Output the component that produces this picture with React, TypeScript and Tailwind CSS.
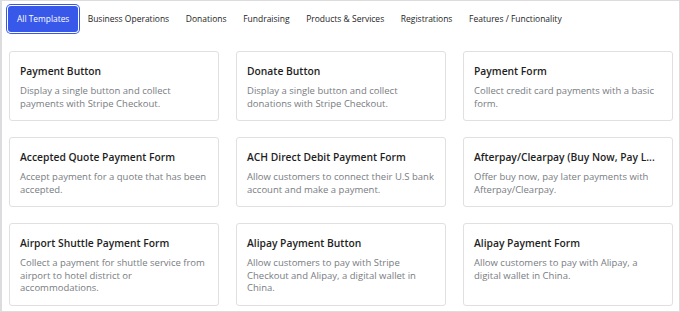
const tabs = [
  'All Templates',
  'Business Operations',
  'Donations',
  'Fundraising',
  'Products & Services',
  'Registrations',
  'Features / Functionality',
];

const templates: Array<{ title: string; desc: string }> = [
  { title: 'Payment Button', desc: 'Display a single button and collect payments with Stripe Checkout.' },
  { title: 'Donate Button', desc: 'Display a single button and collect donations with Stripe Checkout.' },
  { title: 'Payment Form', desc: 'Collect credit card payments with a basic form.' },
  { title: 'Accepted Quote Payment Form', desc: 'Accept payment for a quote that has been accepted.' },
  { title: 'ACH Direct Debit Payment Form', desc: 'Allow customers to connect their U.S bank account and make a payment.' },
  { title: 'Afterpay/Clearpay (Buy Now, Pay L...', desc: 'Offer buy now, pay later payments with Afterpay/Clearpay.' },
  { title: 'Airport Shuttle Payment Form', desc: 'Collect a payment for shuttle service from airport to hotel district or accommodations.' },
  { title: 'Alipay Payment Button', desc: 'Allow customers to pay with Stripe Checkout and Alipay, a digital wallet in China.' },
  { title: 'Alipay Payment Form', desc: 'Allow customers to pay with Alipay, a digital wallet in China.' },
];

export default function App() {
  return (
    <div
      className="h-[312px] w-[680px] overflow-hidden border-b border-l-2 border-r border-t border-[#dcdcde] bg-white"
      style={{ fontFamily: '"Open Sans", "Noto Sans", sans-serif' }}
    >
      <div className="flex items-center pl-[6px] pt-[5px]">
        {tabs.map((t, i) =>
          i === 0 ? (
            <span
              key={t}
              className="mr-[1px] flex h-[26px] items-center rounded-[3px] bg-[#3858e9] px-[9px] text-[8.4px] font-medium text-white shadow-[0_0_0_1px_#fff,0_0_0_2px_#3858e9]"
            >
              {t}
            </span>
          ) : (
            <span key={t} className="px-[8.3px] text-[8.5px] leading-[14px] text-[#1e1e1e]">
              {t}
            </span>
          ),
        )}
      </div>

      <div className="grid grid-cols-3 gap-x-[17px] gap-y-[16px] pl-[7px] pr-[6px] pt-[19px]">
        {templates.map((t) => (
          <div key={t.title} className="rounded-[3px] border border-[#e0e0e0] pb-[10px] pl-[10px] pr-[9px] pt-[11px]">
            <div className="whitespace-nowrap text-[10.3px] leading-[16px] font-semibold text-[#1e1e1e]">{t.title}</div>
            <div className="mt-[6px] text-[9.5px] leading-[12.5px] text-[#787c82]">{t.desc}</div>
          </div>
        ))}
      </div>
    </div>
  );
}
